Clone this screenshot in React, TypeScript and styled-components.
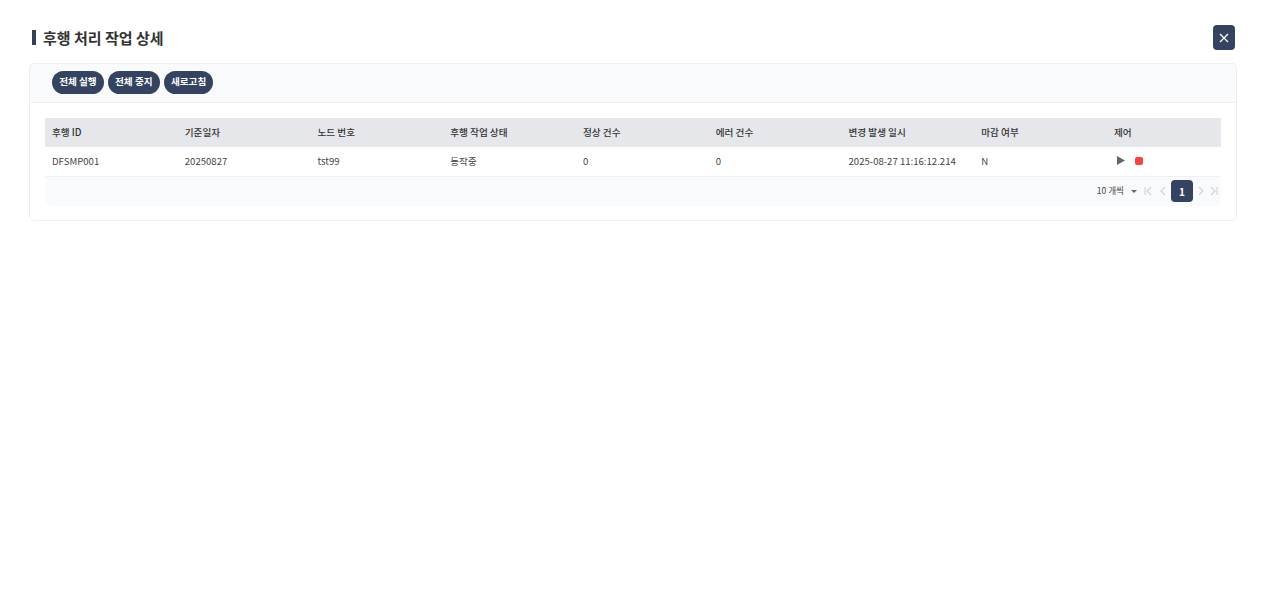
import styled, { createGlobalStyle } from 'styled-components'

const GlobalStyle = createGlobalStyle`
    html, body {
        margin: 0;
        padding: 0;
        background: #fff;
        font-family: "Noto Sans CJK KR", "Noto Sans", sans-serif;
        color: #333;
    }
`

const Page = styled.div`
    width: 1266px;
    height: 594px;
    box-sizing: border-box;
    padding: 25px 29px 0 29px;
    overflow: hidden;
`

const Header = styled.div`
    display: flex;
    justify-content: space-between;
    align-items: center;
    height: 25px;
    margin-bottom: 13px;
    padding-right: 2px;
`

const Title = styled.h2`
    margin: 0 0 0 3px;
    padding-left: 7px;
    border-left: 4px solid #334155;
    height: 15px;
    display: flex;
    align-items: center;
    font-size: 15px;
    font-weight: 700;
    color: #333;
`

const CloseButton = styled.button`
    width: 22px;
    height: 25px;
    padding: 0;
    border: none;
    border-radius: 4px;
    background: #334360;
    color: #fff;
    display: flex;
    align-items: center;
    justify-content: center;
`

const Card = styled.section`
    border: 1px solid #eceef0;
    border-radius: 5px;
    height: 158px;
    box-sizing: border-box;
`

const Toolbar = styled.div`
    height: 39px;
    box-sizing: border-box;
    padding: 7px 22px 0;
    display: flex;
    gap: 4px;
    background: #f9fafb;
    border-bottom: 1px solid #eceef0;
    border-radius: 5px 5px 0 0;
`

const PillButton = styled.button`
    height: 23px;
    padding: 0 7.2px 1px;
    border: none;
    border-radius: 12px;
    background: #334360;
    color: #fff;
    font-family: inherit;
    font-size: 9.6px;
    font-weight: 700;
    line-height: 1;
`

const TableWrap = styled.div`
    margin: 15px 15px 0;
`

const Row = styled.div<{ $head?: boolean }>`
    display: grid;
    grid-template-columns: repeat(8, 132.75px) 1fr;
    height: 29px;
    box-sizing: border-box;
    padding-bottom: 2px;
    align-items: center;
    background: ${props => props.$head ? '#e5e7eb' : '#fff'};
    font-size: 9.6px;
    font-weight: ${props => props.$head ? 500 : 400};
    color: ${props => props.$head ? '#333' : '#444'};
`

const Cell = styled.div`
    padding-left: 7px;
    white-space: nowrap;
`

const Controls = styled.div`
    padding-left: 10px;
    display: flex;
    align-items: center;
    gap: 10px;
`

const StopMark = styled.span`
    width: 8px;
    height: 8px;
    border-radius: 2px;
    background: #ff4040;
`

const Pager = styled.div`
    height: 30px;
    display: flex;
    align-items: center;
    justify-content: flex-end;
    background: #f9fafb;
    border-top: 1px solid #eef0f2;
    border-radius: 0 0 5px 5px;
    box-sizing: border-box;
    padding: 0 2px 1px 0;
    color: #cfd3d8;
`

const PageSize = styled.span`
    font-size: 8.6px;
    color: #444;
    margin-right: 7px;
    margin-bottom: 2px;
`

const Caret = styled.span`
    width: 0;
    height: 0;
    border-left: 3.5px solid transparent;
    border-right: 3.5px solid transparent;
    border-top: 3.5px solid #666;
    margin-right: 6px;
`

const PageIcon = styled.svg<{ $gap?: number }>`
    width: 10px;
    height: 10px;
    margin-left: ${props => props.$gap ?? 0}px;
    fill: none;
    stroke: #cfd3d8;
    stroke-width: 1.1;
`

const CurrentPage = styled.span`
    width: 22px;
    height: 22px;
    margin: 0 3px 0 3px;
    border-radius: 4px;
    background: #334360;
    color: #fff;
    font-size: 10px;
    font-weight: 700;
    display: flex;
    align-items: center;
    justify-content: center;
`

const columns = ['후행 ID', '기준일자', '노드 번호', '후행 작업 상태', '정상 건수', '에러 건수', '변경 발생 일시', '마감 여부', '제어']
const values = ['DFSMP001', '20250827', 'tst99', '동작중', '0', '0', '2025-08-27 11:16:12.214', 'N']

export default function App() {
    return (
        <Page>
            <GlobalStyle />
            <Header>
                <Title>후행 처리 작업 상세</Title>
                <CloseButton aria-label="닫기">
                    <svg width="10" height="10" viewBox="0 0 10 10" stroke="#fff" strokeWidth="1.3">
                        <path d="M1 1 L9 9 M9 1 L1 9" />
                    </svg>
                </CloseButton>
            </Header>
            <Card>
                <Toolbar>
                    <PillButton>전체 실행</PillButton>
                    <PillButton>전체 중지</PillButton>
                    <PillButton>새로고침</PillButton>
                </Toolbar>
                <TableWrap>
                    <Row $head>
                        {columns.map(c => <Cell key={c}>{c}</Cell>)}
                    </Row>
                    <Row>
                        {values.map((v, i) => <Cell key={i}>{v}</Cell>)}
                        <Controls>
                            <svg width="8" height="9" viewBox="0 0 8 9" fill="#666"><path d="M0 0 L8 4.5 L0 9 Z" /></svg>
                            <StopMark />
                        </Controls>
                    </Row>
                    <Pager>
                        <PageSize>10 개씩</PageSize>
                        <Caret />
                        <PageIcon viewBox="0 0 10 10"><path d="M2 1 V9 M8 1 L4 5 L8 9" /></PageIcon>
                        <PageIcon viewBox="0 0 10 10" $gap={5}><path d="M7 1 L3 5 L7 9" /></PageIcon>
                        <CurrentPage>1</CurrentPage>
                        <PageIcon viewBox="0 0 10 10"><path d="M3 1 L7 5 L3 9" /></PageIcon>
                        <PageIcon viewBox="0 0 10 10" $gap={3}><path d="M8 1 V9 M2 1 L6 5 L2 9" /></PageIcon>
                    </Pager>
                </TableWrap>
            </Card>
        </Page>
    )
}
